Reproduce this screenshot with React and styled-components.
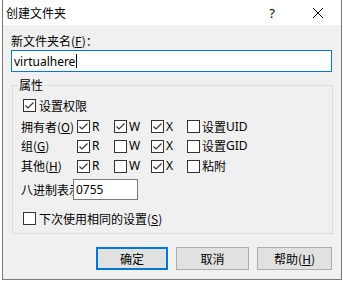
import React from "react";
import styled, { createGlobalStyle } from "styled-components";

const Global = createGlobalStyle`
  html, body { margin: 0; padding: 0; background: #ffffff; }
  body { font-family: "Noto Sans", "Noto Sans CJK SC", sans-serif; font-size: 12px; color: #000; }
  * { box-sizing: border-box; }
`;

const Window = styled.div`
  margin-left: 2px;
  width: 340px;
  height: 280px;
  border: 1px solid #7a7a7a;
  border-top: none;
  background: #f0f0f0;
  display: flex;
  flex-direction: column;
`;

const TitleBar = styled.div`
  height: 25px;
  background: #ffffff;
  display: flex;
  align-items: center;
`;

const Title = styled.div`
  flex: 1;
  padding-left: 3px;
  font-family: "Noto Sans CJK SC", sans-serif;
  font-size: 12px;
  line-height: 16px;
`;

const CaptionButton = styled.div`
  width: 46px;
  height: 25px;
  display: flex;
  align-items: center;
  justify-content: center;
  font-family: "Noto Sans", sans-serif;
  font-size: 13px;
`;

const Body = styled.div`
  display: flex;
  flex-direction: column;
  padding: 8px 0 0 0;
`;

const Label = styled.div`
  font-family: "Noto Sans CJK SC", sans-serif;
  font-size: 12px;
  line-height: 16px;
  padding-left: 8px;
  white-space: nowrap;
`;

const U = styled.span`
  text-decoration: underline;
  text-underline-offset: 1px;
`;

const NameInput = styled.div`
  margin: 1px 0 0 8px;
  width: 321px;
  height: 22px;
  border: 1px solid #0078d7;
  background: #fff;
  display: flex;
  align-items: center;
  padding-left: 2px;
  font-family: "Noto Sans", sans-serif;
  font-size: 12px;
`;

const Caret = styled.span`
  display: inline-block;
  width: 1px;
  height: 14px;
  background: #000;
  margin-left: 1px;
`;

const Group = styled.fieldset`
  margin: 5px 8px 0 9px;
  width: 321px;
  padding: 4px 0 7px 0;
  border: 1px solid #dcdcdc;
  display: flex;
  flex-direction: column;
`;

const Legend = styled.legend`
  margin-left: 5px;
  padding: 0 1px;
  font-family: "Noto Sans CJK SC", sans-serif;
  font-size: 12px;
  line-height: 16px;
`;

const CheckRow = styled.div`
  display: flex;
  align-items: center;
  height: 16px;
  padding-left: 10px;
  margin-top: ${(p) => p.$mt || 0}px;
  font-family: "Noto Sans CJK SC", sans-serif;
  font-size: 12px;
  white-space: nowrap;
`;

const Box = styled.span`
  width: 13px;
  height: 13px;
  border: 1px solid #333;
  background: #fff;
  display: inline-flex;
  align-items: center;
  justify-content: center;
  flex: none;
  margin-right: ${(p) => p.$gap ?? 3}px;
`;

const PermGrid = styled.div`
  margin-top: 4px;
  display: grid;
  grid-template-columns: 56px 37px 37px 36px 1fr;
  grid-template-rows: 19px 20px 20px;
  padding-left: 8px;
  align-items: center;
  font-family: "Noto Sans CJK SC", sans-serif;
  font-size: 12px;
`;

const Cell = styled.div`
  display: flex;
  align-items: center;
  white-space: nowrap;
  line-height: 16px;
`;

const Latin = styled.span`
  font-family: "Noto Sans", sans-serif;
`;

const OctalRow = styled.div`
  margin-top: 3px;
  padding-left: 8px;
  display: flex;
  align-items: center;
  height: 21px;
`;

const OctalLabel = styled.div`
  width: 52px;
  overflow: hidden;
  white-space: nowrap;
  font-family: "Noto Sans CJK SC", sans-serif;
  font-size: 12px;
  line-height: 16px;
`;

const OctalInput = styled.div`
  width: 65px;
  height: 21px;
  border: 1px solid #7a7a7a;
  background: #fff;
  display: flex;
  align-items: center;
  padding-left: 2px;
  font-family: "Noto Sans", sans-serif;
  font-size: 12px;
`;

const Buttons = styled.div`
  margin-top: 13px;
  display: flex;
  justify-content: flex-end;
  gap: 8px;
  padding-right: 9px;
`;

const Button = styled.div`
  width: ${(p) => p.$w}px;
  height: 23px;
  background: #e1e1e1;
  border: ${(p) => (p.$default ? "2px solid #0078d7" : "1px solid #adadad")};
  display: flex;
  align-items: center;
  justify-content: center;
  font-family: "Noto Sans CJK SC", sans-serif;
  font-size: 12px;
  line-height: 16px;
`;

const Check = ({ on, gap }) => (
  <Box $gap={gap}>
    {on && (
      <svg width="11" height="11" viewBox="0 0 11 11">
        <path d="M1.5 5.5 L4 8 L9.5 2.5" fill="none" stroke="#333" strokeWidth="1.2" />
      </svg>
    )}
  </Box>
);

const Perm = ({ on, children }) => (
  <Cell>
    <Check on={on} gap={2} />
    {children}
  </Cell>
);

export default function App() {
  const rows = [
    { label: <>拥有者(<U>O</U>)</>, r: true, w: true, x: true, extra: <>设置<Latin>UID</Latin></> },
    { label: <>组(<U>G</U>)</>, r: true, w: false, x: true, extra: <>设置<Latin>GID</Latin></> },
    { label: <>其他(<U>H</U>)</>, r: true, w: false, x: true, extra: <>粘附</> },
  ];
  return (
    <>
      <Global />
      <Window>
        <TitleBar>
          <Title>创建文件夹</Title>
          <CaptionButton>?</CaptionButton>
          <CaptionButton>
            <svg width="10" height="10" viewBox="0 0 10 10">
              <path d="M0 0 L10 10 M10 0 L0 10" stroke="#000" strokeWidth="1" />
            </svg>
          </CaptionButton>
        </TitleBar>
        <Body>
          <Label>新文件夹名(<U>F</U>)：</Label>
          <NameInput>
            virtualhere<Caret />
          </NameInput>
          <Group>
            <Legend>属性</Legend>
            <CheckRow>
              <Check on />
              设置权限
            </CheckRow>
            <PermGrid>
              {rows.map((row, i) => (
                <React.Fragment key={i}>
                  <Cell>{row.label}</Cell>
                  <Perm on={row.r}><Latin>R</Latin></Perm>
                  <Perm on={row.w}><Latin>W</Latin></Perm>
                  <Perm on={row.x}><Latin>X</Latin></Perm>
                  <Perm on={false}>{row.extra}</Perm>
                </React.Fragment>
              ))}
            </PermGrid>
            <OctalRow>
              <OctalLabel>八进制表示</OctalLabel>
              <OctalInput>0755</OctalInput>
            </OctalRow>
            <CheckRow $mt={10}>
              <Check on={false} />
              下次使用相同的设置(<U>S</U>)
            </CheckRow>
          </Group>
          <Buttons>
            <Button $w={72} $default>确定</Button>
            <Button $w={73}>取消</Button>
            <Button $w={75}>帮助(<U>H</U>)</Button>
          </Buttons>
        </Body>
      </Window>
    </>
  );
}
